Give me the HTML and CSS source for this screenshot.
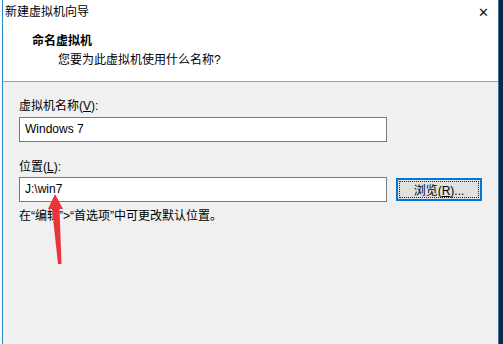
FILE: index.html
```html
<!DOCTYPE html>
<html lang="zh-CN">
<head>
    <meta charset="UTF-8">
    <title>新建虚拟机向导</title>
    <link rel="stylesheet" href="styles.css">
</head>
<body>
    <div class="desk">
        <div class="window">
            <div class="titlebar">
                <span class="title">新建虚拟机向导</span>
                <span class="close">&#x2715;</span>
            </div>

            <div class="header">
                <div class="header-title">命名虚拟机</div>
                <div class="header-sub">您要为此虚拟机使用什么名称?</div>
            </div>

            <div class="content">
                <label class="label">虚拟机名称(<u>V</u>):</label>
                <div class="row">
                    <div class="input">Windows 7</div>
                </div>

                <label class="label label-second">位置(<u>L</u>):</label>
                <div class="row">
                    <div class="input">J:\win7</div>
                    <button class="btn">浏览(<u>R</u>)...</button>
                </div>

                <p class="hint">在“编辑”&gt;“首选项”中可更改默认位置。</p>
            </div>
        </div>
        <div class="edge"></div>

        <!-- red pointer drawn over the dialog -->
        <svg class="arrow" width="503" height="344" viewBox="0 0 503 344">
            <polygon points="55,194 63,209 59.5,209 61.5,264 58,264 52,209 48,209" fill="#e8353b"/>
        </svg>
    </div>
</body>
</html>
```

FILE: styles.css
```css
* {
    margin: 0;
    padding: 0;
    box-sizing: border-box;
}

body {
    background: #ffffff;
    font-family: "Liberation Sans", "Noto Sans CJK SC", sans-serif;
    font-size: 12px;
    color: #000;
}

.desk {
    position: relative;
    display: flex;
    width: 503px;
    height: 344px;
    padding-left: 2px;
    background: #f7fbfd;
}

.window {
    flex: 1;
    display: flex;
    flex-direction: column;
    border-left: 1px solid #2a8ac4;
    background: #f0f0f0;
}

.edge {
    width: 5px;
    background: #0f2740;
    border-left: 1px solid #3b6f9e;
}

.titlebar {
    height: 26px;
    display: flex;
    align-items: center;
    justify-content: space-between;
    padding: 0 9px 2px 2px;
    background: #fff;
}

.title {
    line-height: 16px;
}

.close {
    font-family: "DejaVu Sans", sans-serif;
    font-size: 13px;
    color: #111;
}

.header {
    height: 56px;
    padding: 7px 0 0 29px;
    background: #fff;
    border-bottom: 1px solid #a0a0a0;
}

.header-title {
    font-weight: bold;
    line-height: 16px;
}

.header-sub {
    margin: 3px 0 0 26px;
    line-height: 16px;
}

.content {
    flex: 1;
    padding: 16px 0 0 16px;
}

.label {
    display: block;
    line-height: 16px;
    margin-bottom: 3px;
}

.label u, .btn u {
    text-decoration: underline;
}

.label-second {
    margin-top: 17px;
    margin-bottom: 2px;
}

.row {
    display: flex;
    align-items: center;
    gap: 9px;
}

.input {
    width: 368px;
    height: 25px;
    padding: 0 5px;
    line-height: 23px;
    background: #fff;
    border: 1px solid #7a7a7a;
}

.btn {
    width: 86px;
    height: 23px;
    font: inherit;
    background: #e1e1e1;
    border: 2px solid #0078d7;
    outline: 1px dotted #222;
    outline-offset: -4px;
}

.hint {
    margin-top: 6px;
    line-height: 16px;
}

.arrow {
    position: absolute;
    left: 0;
    top: 0;
    pointer-events: none;
}
```
